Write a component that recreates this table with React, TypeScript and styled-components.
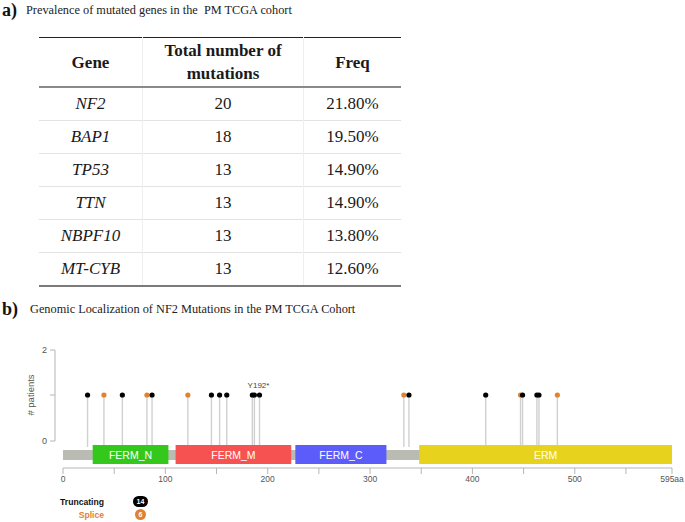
import React from "react";
import styled, { createGlobalStyle } from "styled-components";

const GlobalStyle = createGlobalStyle`
  html, body { margin: 0; padding: 0; background: #ffffff; }
  body { font-family: "Liberation Serif", "Times New Roman", serif; color: #111; }
`;

const Page = styled.div`
  width: 685px;
  height: 522px;
  overflow: hidden;
  background: #fff;
  display: flex;
  flex-direction: column;
`;

const SectionHeader = styled.div<{ $gap: number; $top: number }>`
  display: flex;
  align-items: center;
  height: 20px;
  margin-top: ${(p) => p.$top}px;
  padding-left: 2px;
  gap: ${(p) => p.$gap}px;
`;

const Letter = styled.span`
  font-family: "Liberation Serif", serif;
  font-weight: 700;
  font-size: 18px;
  line-height: 20px;
  color: #111;
`;

const Caption = styled.span`
  font-family: "Liberation Serif", serif;
  font-size: 12.3px;
  line-height: 20px;
  color: #222;
  white-space: pre;
`;

const Table = styled.table`
  margin: 17px 0 0 39px;
  width: 360px;
  border-collapse: collapse;
  table-layout: fixed;
  font-family: "Liberation Serif", "Times New Roman", serif;
  font-size: 17px;
  color: #1a1a1a;
  border-top: 1.5px solid #222;
  border-bottom: 2px solid #7a7a7a;
`;

const HeadCell = styled.th<{ $w: number }>`
  width: ${(p) => p.$w}px;
  height: 48px;
  padding: 0;
  font-family: "Liberation Serif", "Times New Roman", serif;
  font-weight: 700;
  font-size: 17px;
  line-height: 23px;
  text-align: center;
  vertical-align: middle;
  color: #1a1a1a;
  border-bottom: 2px solid #8a8a8a;
  border-left: 1px solid #efefef;
  &:first-child { border-left: none; }
`;

const Cell = styled.td<{ $italic?: boolean }>`
  height: 32px;
  padding: 0;
  font-family: "Liberation Serif", "Times New Roman", serif;
  font-size: 17px;
  color: #1a1a1a;
  text-align: center;
  vertical-align: middle;
  font-style: ${(p) => (p.$italic ? "italic" : "normal")};
  border-top: 1px solid #e3e3e3;
  border-left: 1px solid #efefef;
  &:first-child { border-left: none; }
`;

const Chart = styled.svg`
  display: block;
  width: 685px;
  height: 172px;
  font-family: "Liberation Sans", Arial, sans-serif;
`;

const Legend = styled.div`
  display: grid;
  grid-template-columns: 104px 15px;
  grid-auto-rows: 13px;
  column-gap: 29px;
  margin-top: 4px;
  font-family: "Liberation Sans", Arial, sans-serif;
`;

const LegendLabel = styled.span<{ $color: string }>`
  justify-self: end;
  align-self: center;
  font-size: 8.6px;
  font-weight: 700;
  color: ${(p) => p.$color};
`;

const Badge = styled.span<{ $color: string; $w: number }>`
  justify-self: center;
  align-self: center;
  width: ${(p) => p.$w}px;
  height: 11px;
  border-radius: 6px;
  background: ${(p) => p.$color};
  color: #fff;
  font-size: 7px;
  font-weight: 700;
  display: flex;
  align-items: center;
  justify-content: center;
`;

const genes = [
  { gene: "NF2", n: 20, freq: "21.80%" },
  { gene: "BAP1", n: 18, freq: "19.50%" },
  { gene: "TP53", n: 13, freq: "14.90%" },
  { gene: "TTN", n: 13, freq: "14.90%" },
  { gene: "NBPF10", n: 13, freq: "13.80%" },
  { gene: "MT-CYB", n: 13, freq: "12.60%" },
];

const BLACK = "#000000";
const ORANGE = "#e0832f";

type Mut = { aa: number; splice?: boolean; label?: string };
const muts: Mut[] = [
  { aa: 24 },
  { aa: 40, splice: true },
  { aa: 58 },
  { aa: 82, splice: true },
  { aa: 87 },
  { aa: 122, splice: true },
  { aa: 145 },
  { aa: 153 },
  { aa: 160 },
  { aa: 185 },
  { aa: 187 },
  { aa: 192, label: "Y192*" },
  { aa: 333, splice: true },
  { aa: 338 },
  { aa: 413 },
  { aa: 447, splice: true },
  { aa: 449 },
  { aa: 463 },
  { aa: 465 },
  { aa: 483, splice: true },
];

const domains = [
  { name: "FERM_N", from: 29, to: 103, color: "#35c81c" },
  { name: "FERM_M", from: 110, to: 223, color: "#f75252" },
  { name: "FERM_C", from: 227, to: 316, color: "#5c5cfb" },
  { name: "ERM", from: 348, to: 595, color: "#e7d21e" },
];

const X0 = 63;
const SCALE = (672 - 63) / 595;
const sx = (aa: number) => X0 + aa * SCALE;

const Y_TOP = 349;
const Y_ONE = 394;
const Y_ZERO = 440;

function LollipopChart() {
  const majors = [0, 100, 200, 300, 400, 500];
  const minors = [50, 150, 250, 350, 450, 550];
  return (
    <Chart viewBox="0 318 685 172">
      {/* y axis */}
      <line x1={55} y1={Y_TOP} x2={55} y2={Y_ZERO} stroke="#b5b5b5" strokeWidth={1} />
      {[Y_TOP, Y_ONE, Y_ZERO].map((y) => (
        <line key={y} x1={50} y1={y} x2={55} y2={y} stroke="#b5b5b5" strokeWidth={1} />
      ))}
      <text x={47} y={Y_TOP + 3} fontSize={9} fill="#555" textAnchor="end">2</text>
      <text x={47} y={Y_ZERO + 3} fontSize={9} fill="#555" textAnchor="end">0</text>
      <text
        x={0}
        y={0}
        fontSize={9.5}
        fill="#555"
        textAnchor="middle"
        transform={`translate(34 ${Y_ONE}) rotate(-90)`}
      >
        # patients
      </text>

      {/* stems */}
      {muts.map((m, i) => (
        <line key={`s${i}`} x1={sx(m.aa)} y1={Y_ONE} x2={sx(m.aa)} y2={446} stroke="#d0d0d0" strokeWidth={1.4} />
      ))}

      {/* backbone */}
      <rect x={X0} y={449} width={672 - X0} height={10} fill="#babcb4" />
      {domains.map((d) => (
        <g key={d.name}>
          <rect x={sx(d.from)} y={444} width={sx(d.to) - sx(d.from)} height={19} fill={d.color} />
          <text
            x={(sx(d.from) + sx(d.to)) / 2}
            y={457.5}
            fontSize={10.5}
            fill="#ffffff"
            textAnchor="middle"
          >
            {d.name}
          </text>
        </g>
      ))}

      {/* heads */}
      {muts.map((m, i) => (
        <circle key={`c${i}`} cx={sx(m.aa)} cy={Y_ONE} r={2.6} fill={m.splice ? ORANGE : BLACK} />
      ))}
      {muts
        .filter((m) => m.label)
        .map((m) => (
          <text key={m.label} x={sx(m.aa) - 1} y={387} fontSize={8} fill="#444" textAnchor="middle">
            {m.label}
          </text>
        ))}

      {/* x axis */}
      <line x1={X0} y1={467} x2={672} y2={467} stroke="#b5b5b5" strokeWidth={1} />
      {[...majors, ...minors, 595].map((t) => (
        <line key={`t${t}`} x1={sx(t)} y1={467} x2={sx(t)} y2={473} stroke="#b5b5b5" strokeWidth={1} />
      ))}
      {majors.map((t) => (
        <text key={`l${t}`} x={sx(t)} y={481} fontSize={8.5} fill="#555" textAnchor="middle">
          {t}
        </text>
      ))}
      <text x={sx(595)} y={481} fontSize={8.5} fill="#555" textAnchor="middle">595aa</text>
    </Chart>
  );
}

export default function App() {
  return (
    <>
      <GlobalStyle />
      <Page>
        <SectionHeader $gap={9} $top={0}>
          <Letter>a)</Letter>
          <Caption>{"Prevalence of mutated genes in the  PM TCGA cohort"}</Caption>
        </SectionHeader>
        <Table>
          <thead>
            <tr>
              <HeadCell $w={103}>Gene</HeadCell>
              <HeadCell $w={160}>
                Total number of
                <br />
                mutations
              </HeadCell>
              <HeadCell $w={97}>Freq</HeadCell>
            </tr>
          </thead>
          <tbody>
            {genes.map((g) => (
              <tr key={g.gene}>
                <Cell $italic>{g.gene}</Cell>
                <Cell>{g.n}</Cell>
                <Cell>{g.freq}</Cell>
              </tr>
            ))}
          </tbody>
        </Table>
        <SectionHeader $gap={12} $top={12}>
          <Letter>b)</Letter>
          <Caption>Genomic Localization of NF2 Mutations in the PM TCGA Cohort</Caption>
        </SectionHeader>
        <LollipopChart />
        <Legend>
          <LegendLabel $color="#111">Truncating</LegendLabel>
          <Badge $color={BLACK} $w={15}>14</Badge>
          <LegendLabel $color={ORANGE}>Splice</LegendLabel>
          <Badge $color={ORANGE} $w={11}>6</Badge>
        </Legend>
      </Page>
    </>
  );
}
